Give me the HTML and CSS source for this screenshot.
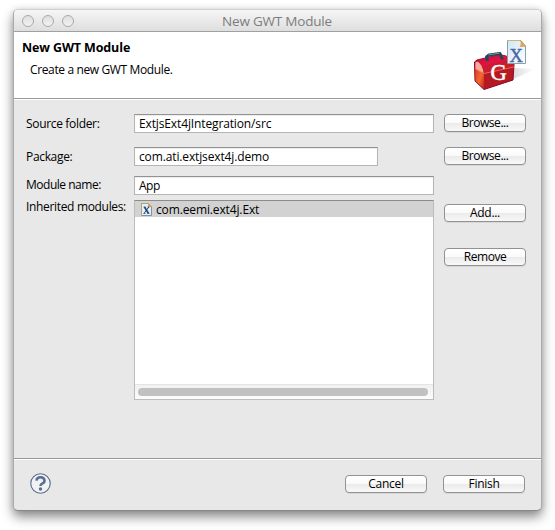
FILE: index.html
```
<!DOCTYPE html>
<html lang="en">
<head>
<meta charset="utf-8">
<title>New GWT Module</title>
<link rel="stylesheet" href="styles.css">
</head>
<body>
<div class="window">
  <div class="titlebar">
    <div class="lights"><i class="light"></i><i class="light"></i><i class="light"></i></div>
    <span class="window-title">New GWT Module</span>
  </div>
  <header class="banner">
    <div class="banner-text">
      <h1>New GWT Module</h1>
      <p>Create a new GWT Module.</p>
    </div>
    <svg class="logo" width="62" height="54" viewBox="0 0 62 54">
      <defs>
        <linearGradient id="shade" x1="0" x2="1"><stop offset="0" stop-color="#a5a5b0"/><stop offset="1" stop-color="#fff"/></linearGradient>
        <linearGradient id="side" x1="0" y1="0" x2="1" y2="1"><stop offset="0" stop-color="#d92b25"/><stop offset=".6" stop-color="#f26a2c"/><stop offset="1" stop-color="#c51d22"/></linearGradient>
        <linearGradient id="lid" x1="0" x2="1" y1="0" y2="1"><stop offset="0" stop-color="#b50d3c"/><stop offset=".5" stop-color="#e11440"/><stop offset="1" stop-color="#c2102f"/></linearGradient>
        <linearGradient id="page" x1="0" y1="0" x2="1" y2="1"><stop offset="0" stop-color="#cfe6f8"/><stop offset="1" stop-color="#fff"/></linearGradient>
      </defs>
      <path d="M38 29L62 30L52 35L38 41L24 46Z" fill="url(#shade)" opacity=".7"/>
      <path d="M1.500 23L4 21L27 15.500L40 19L41 25L40 41L11 50.500L2 42Z" fill="#b51a22" stroke="#850b27"/>
      <path d="M2 24L4 22L9 27L11 34V50L2.500 42Z" fill="url(#side)"/>
      <path d="M2.500 23.500Q5 21 8 26L10.500 32L10 34L2.500 30Z" fill="#f8aa9d"/>
      <path d="M4 21L27 15.500L40 19L39 22L10 28Z" fill="url(#lid)"/>
      <path d="M9.500 28L40 21.500L41 28L11 34.500Z" fill="#c91e2b"/>
      <path d="M2.500 30L11 34.500L41 28" fill="none" stroke="#ef7770" stroke-width=".8"/>
      <path d="M14.500 22L13.500 18L16 16L27 14.500L29.500 20.500" fill="none" stroke="#23475a" stroke-width="3" stroke-linejoin="round"/>
      <path d="M15.500 15.800L26.500 14.200" stroke="#6897a9" stroke-width="1"/>
      <text x="17.500" y="40.500" class="logo-g">G</text>
      <path d="M34.500 1.500H48L52.500 7V24.500H34.500Z" fill="url(#page)" stroke="#8aa0a4"/>
      <path d="M34.500 1.500H48" stroke="#d2b36d"/>
      <path d="M47.500 1.500Q49 5 47 7.500L52.500 7.500Z" fill="#eda44b" stroke="#d99a4e" stroke-width=".6"/>
      <text x="36.500" y="22.500" class="logo-x">X</text>
    </svg>
  </header>
  <main class="form">
    <label>Source folder:</label>
    <div class="field t-path">ExtjsExt4jIntegration/src</div>
    <button class="t-browse">Browse...</button>

    <label>Package:</label>
    <div class="field short t-path">com.ati.extjsext4j.demo</div>
    <button class="t-browse">Browse...</button>

    <label class="module-label">Module name:</label>
    <div class="field wide t-app">App</div>

    <label class="list-label">Inherited modules:</label>
    <div class="list">
      <div class="item">
        <svg width="11" height="13" viewBox="0 0 11 13">
          <path d="M.5.500H7.500L10.500 3.500V12.500H.5Z" fill="#e3f0fb" stroke="#7d91ad"/>
          <path d="M.5 12V.5H7.500" fill="none" stroke="#b9a468"/>
          <path d="M7 0L11 4H7Z" fill="#dfa750"/>
          <path d="M3.500 4L7.500 10.500" stroke="#26446f" stroke-width="1.700"/>
          <path d="M7.800 4L3 10.500" stroke="#26446f"/>
          <path d="M2.500 4H4.500M6.500 4H8.500M2.500 10.500H4.500M6.500 10.500H8.500" stroke="#26446f" stroke-width=".7"/>
        </svg>
        <span class="t-item">com.eemi.ext4j.Ext</span>
      </div>
      <div class="scroll"><div class="thumb"></div></div>
    </div>
    <div class="side-buttons"><button class="t-add">Add...</button><button class="t-browse">Remove</button></div>
  </main>
  <footer class="footer">
    <svg width="21" height="21" viewBox="0 0 22 22">
      <circle cx="11" cy="11" r="10.200" fill="#f1f2f4" stroke="#5b6e91" stroke-width="1.200"/>
      <path d="M6.800 8Q7 4.500 11 4.500T15.200 8Q15.200 10 12.700 11.100Q11 11.900 11 13.500" fill="none" stroke="#5b6e91" stroke-width="2.700"/>
      <circle cx="11" cy="16.800" r="1.800" fill="#5b6e91"/>
    </svg>
    <div class="actions"><button class="t-cancel">Cancel</button><button class="t-cancel">Finish</button></div>
  </footer>
</div>
</body>
</html>
```
FILE: styles.css
```
* { box-sizing: border-box; }
body {
  margin: 0;
  height: 530px;
  padding: 9px 13px 0;
  overflow: hidden;
  background: #fff;
  color: #000;
  font: 12px/16px "Open Sans", "Noto Sans", sans-serif;
}
.window {
  width: 529px;
  height: 502px;
  display: flex;
  flex-direction: column;
  overflow: hidden;
  border: 1px solid #a9a9a9;
  border-top-color: #d0d0d0;
  border-bottom-color: #888;
  border-radius: 5px;
  background: #e8e8e8;
  box-shadow: 0 6px 12px rgba(0,0,0,.45), 0 0 6px rgba(0,0,0,.1);
}
.titlebar {
  flex: none;
  height: 22px;
  display: grid;
  grid-template-columns: 1fr auto 1fr;
  align-items: center;
  padding: 0 9px 0 8px;
  border-bottom: 1px solid #a0a0a0;
  background: linear-gradient(#f6f6f6, #dedede);
}
.lights { display: flex; gap: 8px; }
.light {
  width: 12px;
  height: 12px;
  border: 1px solid #aaa;
  border-radius: 50%;
  background: linear-gradient(#dedede, #f2f2f2);
}
.window-title { color: #7d7d7d; font-size: 13.5px; letter-spacing: -.2px; }
.banner {
  flex: none;
  height: 67px;
  display: flex;
  justify-content: space-between;
  padding: 7px 6px 0 8px;
  border-bottom: 1px solid #999;
  background: #fff;
}
.banner h1 { margin: 0; font-size: 12.5px; line-height: 18px; letter-spacing: -.13px; }
.banner p { margin: 5px 0 0 8px; letter-spacing: -.37px; }
.logo-g { font: 22.5px "Liberation Serif", serif; fill: #fff; stroke: #fff; stroke-width: .5px; }
.logo-x { font: 18.5px "Liberation Serif", serif; fill: #4967a2; stroke: #4967a2; stroke-width: .4px; }
.form {
  flex: 1;
  display: grid;
  grid-template-columns: 108px 310px 82px;
  grid-template-rows: 33px 29px 24px 200px;
  padding: 14px 0 0 12px;
  border-top: 1px solid #fff;
}
.form label { padding-top: 2px; letter-spacing: -.33px; }
.form .module-label { padding-top: 1px; letter-spacing: -.48px; }
.form .list-label { padding-top: 0; margin-top: -1px; }
.field {
  width: 300px;
  height: 19px;
  padding: 1px 0 0 4px;
  border: 1px solid #b5b5b5;
  border-top-color: #929292;
  background: #fff;
  box-shadow: inset 0 1px 1px #ececec;
}
.t-path, .t-item { letter-spacing: -.13px; }
.t-app { letter-spacing: -.5px; }
.short { width: 244px; }
.wide { grid-column: 2 / 4; }
button {
  width: 82px;
  height: 18px;
  padding: 0;
  border: 1px solid #929292;
  border-radius: 4px;
  background: linear-gradient(#fff 0, #fafafa 50%, #ebebeb 52%, #f8f8f8 100%);
  box-shadow: 0 1px 0 #d7d7d7;
  color: #000;
  font: inherit;
  line-height: 16px;
}
.t-browse { letter-spacing: -.45px; }
.t-add, .t-cancel { letter-spacing: -.3px; }
.list {
  width: 300px;
  height: 200px;
  display: flex;
  flex-direction: column;
  justify-content: space-between;
  border: 1px solid #bcbcbc;
  border-top-color: #8b8b8b;
  background: #fff;
}
.item {
  height: 16px;
  display: flex;
  align-items: center;
  gap: 4px;
  padding-left: 6px;
  background: #d2d2d2;
}
.t-item { padding-top: 1px; }
.scroll {
  height: 15px;
  padding: 3px 5px 0 3px;
  border-top: 1px solid #e4e4e4;
  background: linear-gradient(#f1f1f1, #fcfcfc);
}
.thumb { height: 8px; border-radius: 4px; background: #c1c1c1; }
.side-buttons { display: flex; flex-direction: column; gap: 26px; padding-top: 4px; }
.footer {
  flex: none;
  height: 52px;
  display: flex;
  justify-content: space-between;
  padding: 14px 16px 0;
  border-top: 1px solid #999;
  box-shadow: inset 0 1px 0 #fff;
}
.actions { display: flex; gap: 16px; padding-top: 2px; }
```
